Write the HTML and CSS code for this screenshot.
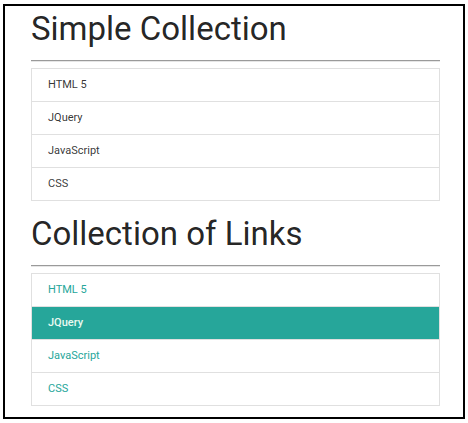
FILE: index.html
```html
<!DOCTYPE html>
<html>
<head>
<meta charset="utf-8">
<link rel="stylesheet" href="styles.css">
</head>
<body>
<div class="frame">
  <h4 class="title">Simple Collection</h4>
  <hr class="rule">
  <ul class="collection">
    <li class="item">HTML 5</li>
    <li class="item">JQuery</li>
    <li class="item">JavaScript</li>
    <li class="item">CSS</li>
  </ul>
  <h4 class="title title-second">Collection of Links</h4>
  <hr class="rule">
  <div class="collection">
    <a class="item link" href="#">HTML 5</a>
    <a class="item link active" href="#">JQuery</a>
    <a class="item link" href="#">JavaScript</a>
    <a class="item link" href="#">CSS</a>
  </div>
</div>
</body>
</html>
```

FILE: styles.css
```css
html, body {
  margin: 0;
  padding: 0;
  background: #fff;
}

body {
  font-family: Roboto, "Liberation Sans", sans-serif;
}

.frame {
  box-sizing: border-box;
  width: 462px;
  height: 415px;
  margin: 4px 0 0 3px;
  border: 2px solid #000;
  padding: 4px 23px 0 26px;
}

.title {
  margin: 0;
  font-size: 33px;
  line-height: 38px;
  font-weight: 400;
  color: rgba(0, 0, 0, 0.87);
}

.title-second {
  margin-top: 14px;
}

.rule {
  margin: 12px 0 6px 0;
  height: 0;
  border: 0;
  border-top: 1px solid #9a9a9a;
  border-bottom: 1px solid #e6e6e6;
}

.collection {
  margin: 0;
  padding: 0;
  list-style: none;
  border: 1px solid #e0e0e0;
  display: flex;
  flex-direction: column;
}

.item {
  display: block;
  height: 32px;
  line-height: 32px;
  padding: 0 16px;
  font-size: 11px;
  color: rgba(0, 0, 0, 0.8);
  border-bottom: 1px solid #e0e0e0;
  text-decoration: none;
}

.item:last-child {
  border-bottom: none;
}

.link {
  color: #26a69a;
}

.link.active {
  background: #26a69a;
  color: #eafaf1;
  font-weight: 500;
}
```
